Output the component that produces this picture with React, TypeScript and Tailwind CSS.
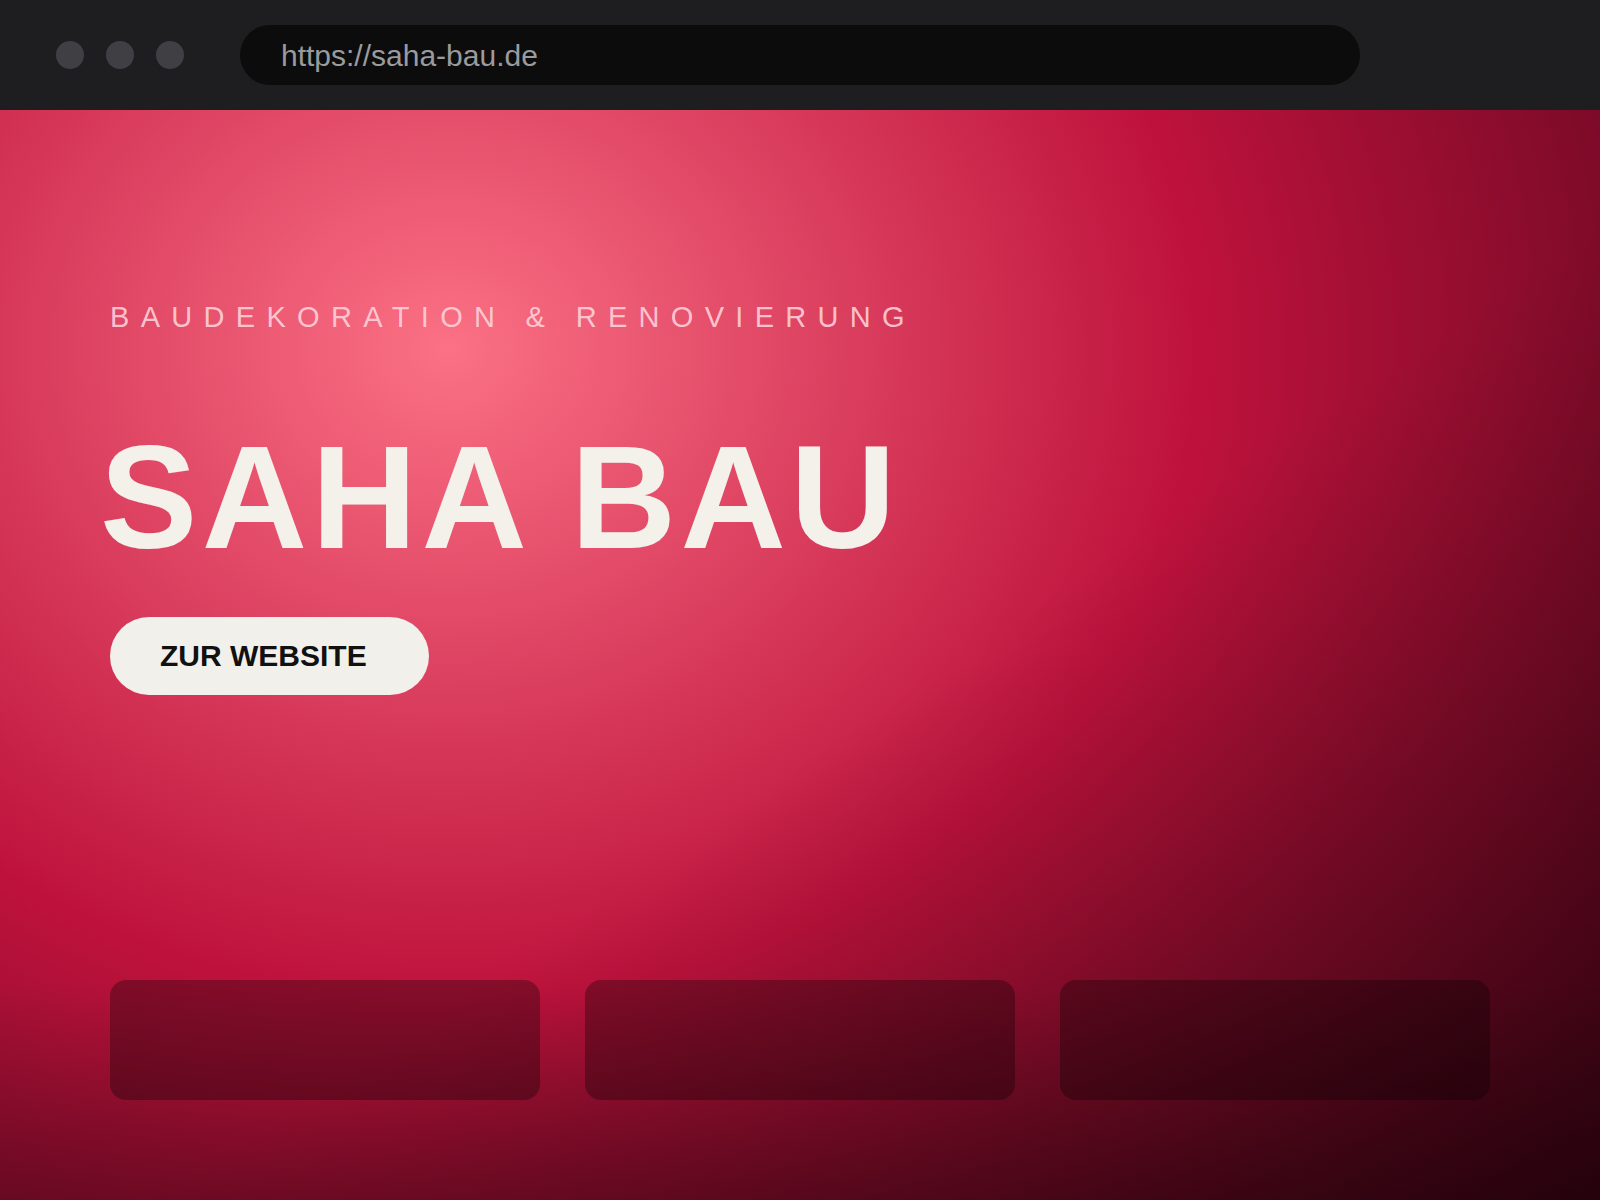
export default function App() {
  return (
    <div className="flex h-[1200px] w-[1600px] flex-col overflow-hidden bg-[#1e1e20] font-['Liberation_Sans',Arial,sans-serif]">
      {/* browser chrome */}
      <div className="flex h-[110px] shrink-0 items-center pl-[56px]">
        <div className="flex gap-[22px]">
          <span className="h-[28px] w-[28px] rounded-full bg-[#3f3f44]" />
          <span className="h-[28px] w-[28px] rounded-full bg-[#3f3f44]" />
          <span className="h-[28px] w-[28px] rounded-full bg-[#3f3f44]" />
        </div>
        <div className="ml-[56px] flex h-[60px] w-[1120px] items-center rounded-full bg-[#0c0c0d] pl-[41px]">
          <span className="text-[30px] text-[#9b9b9d]">https://saha-bau.de</span>
        </div>
      </div>

      {/* hero */}
      <div className="flex flex-1 flex-col justify-between bg-[linear-gradient(to_bottom,rgba(0,0,0,0)_80%,rgba(10,0,4,0.28)_100%),linear-gradient(to_bottom_right,rgba(0,0,0,0)_55%,rgba(20,0,6,0.5)_100%),radial-gradient(ellipse_1500px_1300px_at_28%_22%,#fb7185_0%,#be123c_50%,#4c0519_100%)] px-[110px] pb-[100px] pt-[193px]">
        <div className="flex flex-col items-start">
          <p className="text-[29px] leading-[29px] tracking-[0.39em] text-[#fdd3db]/90">
            BAUDEKORATION &amp; RENOVIERUNG
          </p>
          <h1 className="-ml-[10px] mt-[93px] text-[146px] font-bold leading-[146px] tracking-[0.03em] text-[#f3f1ea]">
            SAHA BAU
          </h1>
          <button className="mt-[46px] flex h-[78px] items-center rounded-full bg-[#f2f0ea] pl-[50px] pr-[62px] text-[30px] font-bold leading-none text-[#111111]">
            ZUR WEBSITE
          </button>
        </div>

        <div className="grid grid-cols-3 gap-[45px]">
          <div className="h-[120px] rounded-2xl bg-black/30" />
          <div className="h-[120px] rounded-2xl bg-black/30" />
          <div className="h-[120px] rounded-2xl bg-black/30" />
        </div>
      </div>
    </div>
  );
}
